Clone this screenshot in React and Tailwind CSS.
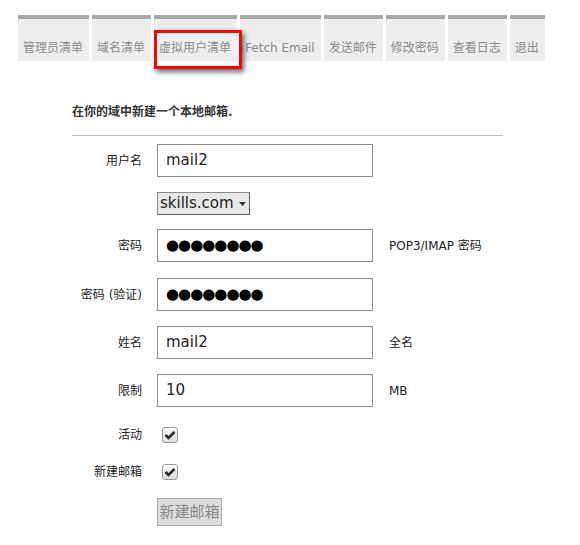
import React from 'react';

const tabs = ['管理员清单', '域名清单', '虚拟用户清单', 'Fetch Email', '发送邮件', '修改密码', '查看日志', '退出'];

const font = "font-['DejaVu_Sans','Noto_Sans_CJK_SC',sans-serif]";

const TextBox = ({ value, dots }) => (
    <div className={`w-[216px] h-[33px] border border-[#8c8c8c] bg-white flex items-center pl-[8px] ${dots ? 'text-[15px] tracking-[-1px] text-black' : 'text-[15px] text-[#222]'}`}>
        {value}
    </div>
);

const Check = () => (
    <span className="ml-[5px] w-[16px] h-[16px] rounded-[3px] border border-[#9a9a9a] bg-gradient-to-b from-[#fafafa] to-[#dcdcdc] flex items-center justify-center">
        <svg width="12" height="10" viewBox="0 0 12 10">
            <path d="M1.5 5 L4.5 8 L10.5 2" fill="none" stroke="#2b2b2b" strokeWidth="2.6" />
        </svg>
    </span>
);

const Row = ({ label, children, note, className = '' }) => (
    <div className={`flex items-center ${className}`}>
        <div className="w-[70px] text-right text-[12px] text-[#222] shrink-0">{label}</div>
        <div className="ml-[15px] flex items-center">{children}</div>
        {note && <div className="ml-[16px] text-[12px] text-[#222]">{note}</div>}
    </div>
);

export default function App() {
    return (
        <div className={`relative w-[580px] h-[545px] bg-white ${font}`}>
            {/* Tabs */}
            <div className="flex gap-[3px] pt-[15px] pl-[18px]">
                {tabs.map(t => (
                    <div key={t} className="h-[46px] bg-[#eeeeee] border-t-4 border-[#a9a9a9] pl-[5px] pr-[6px] pt-[21px] text-[12px] leading-[16px] text-[#8a8a8a] whitespace-nowrap">
                        {t}
                    </div>
                ))}
            </div>

            {/* annotation */}
            <div className="absolute left-[154px] top-[30px] w-[88px] h-[39px] border-[3px] border-[#ff0000] shadow-[2px_3px_5px_rgba(0,0,0,0.6)]" />

            <div className="ml-[72px] w-[431px]">
                <div className="mt-[43px] text-[12px] leading-[16px] font-bold text-[#333]">在你的域中新建一个本地邮箱.</div>
                <div className="mt-[15px] h-px bg-[#bdbdbd]" />

                <div className="mt-[8px] flex flex-col">
                    <Row label="用户名">
                        <TextBox value="mail2" />
                    </Row>
                    <Row label="" className="mt-[15px]">
                        <div className="h-[23px] w-[93px] bg-[#e8e8e8] border border-[#8a8a8a] border-r-[#5a5a5a] border-b-[#5a5a5a] flex items-center pl-[2px] text-[15px] text-[#222]">
                            <span>skills.com</span>
                            <svg className="ml-[5px]" width="7" height="4" viewBox="0 0 7 4"><path d="M0 0 H7 L3.5 4 Z" fill="#333" /></svg>
                        </div>
                    </Row>
                    <Row label="密码" note="POP3/IMAP 密码" className="mt-[14px]">
                        <TextBox value="●●●●●●●●" dots />
                    </Row>
                    <Row label="密码 (验证)" className="mt-[16px]">
                        <TextBox value="●●●●●●●●" dots />
                    </Row>
                    <Row label="姓名" note="全名" className="mt-[15px]">
                        <TextBox value="mail2" />
                    </Row>
                    <Row label="限制" note="MB" className="mt-[15px]">
                        <TextBox value="10" />
                    </Row>
                    <Row label="活动" className="mt-[20px] h-[16px] leading-[16px]">
                        <Check />
                    </Row>
                    <Row label="新建邮箱" className="mt-[21px] h-[16px] leading-[16px]">
                        <Check />
                    </Row>
                    <div className="mt-[18px] ml-[85px]">
                        <div className="w-[65px] h-[28px] bg-[#dddddd] border border-[#a8a8a8] flex items-center justify-center text-[15px] text-[#888]">
                            新建邮箱
                        </div>
                    </div>
                </div>
            </div>
        </div>
    );
}
